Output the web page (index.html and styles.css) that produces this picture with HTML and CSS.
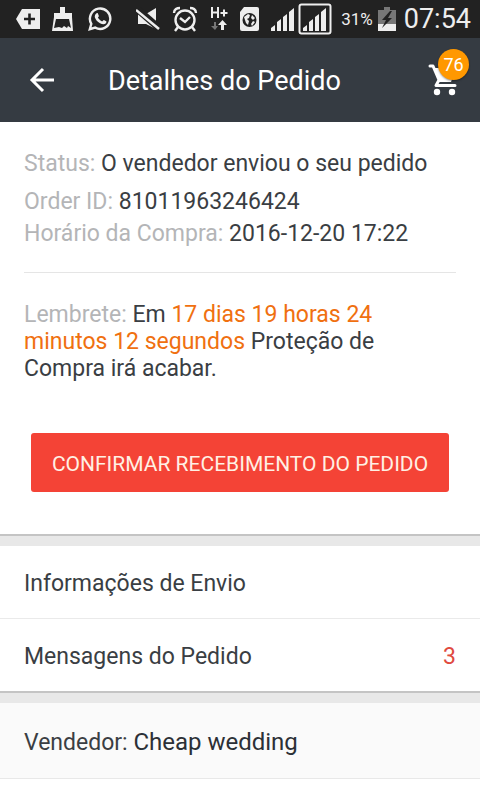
FILE: index.html
```html
<!DOCTYPE html>
<html lang="pt-BR">
<head>
<meta charset="utf-8">
<meta name="viewport" content="width=device-width, initial-scale=1">
<title>Detalhes do Pedido</title>
<link rel="stylesheet" href="styles.css">
</head>
<body>
<div class="status-bar">
  <div class="status-group">
    <svg width="24" height="22" viewBox="0 0 24 22"><path fill="#eee" d="M6 1h18v20H6L0 11z"/><path stroke="#222" stroke-width="2.6" d="M13.500 5.500v11M8 11h11"/></svg>
    <svg width="24" height="24" viewBox="0 0 24 24"><path fill="#eee" d="M8 0h5v6h7v4l1 14H0l2-14V6h6z"/><path fill="#222" d="M4 12h13l2 9-3-2-1 2-3-2-2 2-3-1-5 1z"/></svg>
    <svg width="24" height="24" viewBox="0 0 24 24"><path fill="none" stroke="#eee" stroke-width="2.400" d="M1.800 22.200l1.500-5.400a10.200 10.200 0 1 1 3.900 3.800z"/><path fill="#eee" d="M8.600 6.300c.5-.4 1-.3 1.300.2l1 2.400c.1.500-.8 1.200-1 1.600 1 1.900 2.400 3.100 4.300 3.900.6-.2 1.100-1.500 1.700-1.400l2.300 1.200c.4.300.1 1.500-.3 2-1.300 1.500-3.400 1.400-5.900.1-2.600-1.400-4.400-3.500-5.100-5.700-.5-1.800.4-3.500 1.700-4.300z"/></svg>
  </div>
  <div class="status-group status-right">
    <svg width="24" height="24" viewBox="0 0 24 24"><path fill="#eee" d="M2 7h8l10-6v21l-10-5H2z"/><path stroke="#222" stroke-width="7" d="M0 1l24 21"/><path stroke="#eee" stroke-width="2.500" d="M0 3l23 19"/></svg>
    <svg width="26" height="26" viewBox="0 0 26 26"><g fill="none" stroke="#eee" stroke-width="2.400"><circle cx="13" cy="14" r="9.500"/><path d="M2 7c0-4 3-5 6-5M24 7c0-4-3-5-6-5M6 21l-3 4M20 21l3 4M8 12l5 4 5-5"/></g></svg>
    <svg width="18" height="26" viewBox="0 0 18 26"><path fill="none" stroke="#eee" stroke-width="2" d="M2 1v11M8 1v11M2 6.500h6M10.500 7h7M14 3.500v7"/><path fill="#eee" d="M12.500 14l4.500 5h-3v5h-3v-5H8z"/><path fill="#777" d="M4 16h2v4h2l-3 4-4-4h3z"/></svg>
    <svg width="19" height="24" viewBox="0 0 19 24"><path fill="#eee" d="M4 0h13q2 0 2 2v20q0 2-2 2H2q-2 0-2-2V5z"/><circle cx="9.500" cy="13" r="7" fill="#222"/><path fill="#eee" d="M4 10l4-3 2 1-1 3-2 1 2 2-1 4-2-2-1-3zM12 8l3 3-2 2-2-2zM13 14l2 1-3 4-1-2z"/></svg>
    <div class="signals">
      <svg width="24" height="26" viewBox="0 0 24 26"><path fill="#eee" d="M0 25v-3l4-3v6zM6 25v-9l4-3v12zM12 25V11l4-3v17zM18 25V6l5-4v23z"/></svg>
      <svg width="34" height="32" viewBox="0 0 34 32"><rect x="1.500" y="1.500" width="31" height="29" rx="2" fill="none" stroke="#eee" stroke-width="2"/><path fill="#eee" d="M5 28v-3l4-3v6zM11 28v-9l4-3v12zM17 28V14l4-3v17zM23 28V9l5-4v23z"/></svg>
    </div>
  </div>
  <span class="percent">31%</span>
  <svg width="18" height="24" viewBox="0 0 18 24"><path fill="#777" d="M6 0h6v3h6v15H0V3h6z"/><path fill="#eee" d="M0 17h18v7H0z"/><path fill="#222" d="M12 4L4 13h4l-4 8 10-10h-4l4-7z"/></svg>
  <span class="clock">07:54</span>
</div>
<header class="app-bar">
  <button class="icon-button" type="button" aria-label="Voltar"><svg width="26" height="26" viewBox="0 0 26 26"><path fill="none" stroke="#fff" stroke-width="3" d="M14 2L3 13l11 11M3 13h22"/></svg></button>
  <h1>Detalhes do Pedido</h1>
  <button class="icon-button cart" type="button" aria-label="Carrinho"><svg width="32" height="32" viewBox="0 0 32 32"><path fill="none" stroke="#fff" stroke-width="3" stroke-linejoin="round" stroke-linecap="round" d="M2 2h3l6 14-3 5.500h19"/><path fill="#fff" d="M6 4h22l-5 14H11z"/><circle cx="9" cy="28" r="3.200" fill="#fff"/><circle cx="24" cy="28" r="3.200" fill="#fff"/></svg><span class="badge">76</span></button>
</header>
<main>
  <section class="card summary">
    <p class="state"><span class="label">Status:</span> O vendedor enviou o seu pedido</p>
    <p class="order"><span class="label">Order ID:</span> 81011963246424</p>
    <p><span class="label">Horário da Compra:</span> 2016-12-20 17:22</p>
    <hr>
    <p><span class="label">Lembrete:</span> Em <span class="time">17 dias 19 horas 24 minutos 12 segundos</span> Proteção de Compra irá acabar.</p>
    <button class="confirm" type="button">CONFIRMAR RECEBIMENTO DO PEDIDO</button>
  </section>
  <nav class="card">
    <a class="row" href="#envio">Informações de Envio</a>
    <a class="row" href="#mensagens">Mensagens do Pedido <span class="count">3</span></a>
  </nav>
  <section class="seller">Vendedor: <span class="name">Cheap wedding</span></section>
</main>
</body>
</html>
```

FILE: styles.css
```css
* { box-sizing: border-box; }
body {
  margin: 0;
  background: #fff;
  color: #3a3e43;
  font: 23px/27px Roboto, "Liberation Sans", sans-serif;
}
svg { display: block; flex: none; }
p, h1 { margin: 0; }
button { font: inherit; border: 0; cursor: pointer; }

.status-bar {
  display: flex;
  align-items: center;
  height: 38px;
  padding: 0 9px 0 16px;
  background: #222;
  color: #eee;
}
.status-group { display: flex; align-items: center; gap: 12px; }
.status-right { margin-left: auto; }
.signals { display: flex; align-items: center; gap: 3px; }
.percent { margin: 0 5px 0 9px; font-size: 17px; }
.clock { margin-left: 8px; font-size: 27px; }

.app-bar {
  display: flex;
  align-items: center;
  height: 84px;
  padding: 0 20px 0 29px;
  background: #353b42;
  color: #fff;
}
.app-bar h1 { flex: 1; margin-left: 53px; padding-top: 2px; font-size: 27px; font-weight: 400; }
.icon-button { padding: 0; background: none; color: #fff; }
.cart { position: relative; }
.badge {
  position: absolute;
  top: -15px;
  right: -9px;
  width: 31px;
  height: 31px;
  border-radius: 50%;
  background: #ff9800;
  box-shadow: 0 1px 2px #0006;
  font-size: 18px;
  line-height: 31px;
}

main { background: #e8e8e8; }
.card {
  margin-bottom: 10px;
  border-bottom: 2px solid #c4c4c4;
  background: #fff;
}
.summary { padding: 28px 24px 42px; }
.state { margin-bottom: 11px; }
.order { margin-bottom: 5px; }
.label { color: #b4b5b7; }
.time { color: #f07010; }
hr { margin: 25px 0 28px; border: 0; border-top: 1px solid #e5e5e5; }
.confirm {
  display: block;
  width: calc(100% - 14px);
  height: 59px;
  margin: 51px auto 0;
  padding: 3px 0 0;
  border-radius: 3px;
  background: #f44336;
  color: #fff0e4;
  font-size: 21px;
}
.row {
  display: flex;
  align-items: center;
  justify-content: space-between;
  padding: 24px 24px 21px;
  color: inherit;
  text-decoration: none;
}
.row + .row { border-top: 1px solid #eaeaea; }
.count { color: #e04a3f; }
.seller {
  padding: 26px 24px 22px;
  border-bottom: 1px solid #e8e8e8;
  background: #fafafa;
}
.name { color: #2c3036; font-size: 24px; }
```
